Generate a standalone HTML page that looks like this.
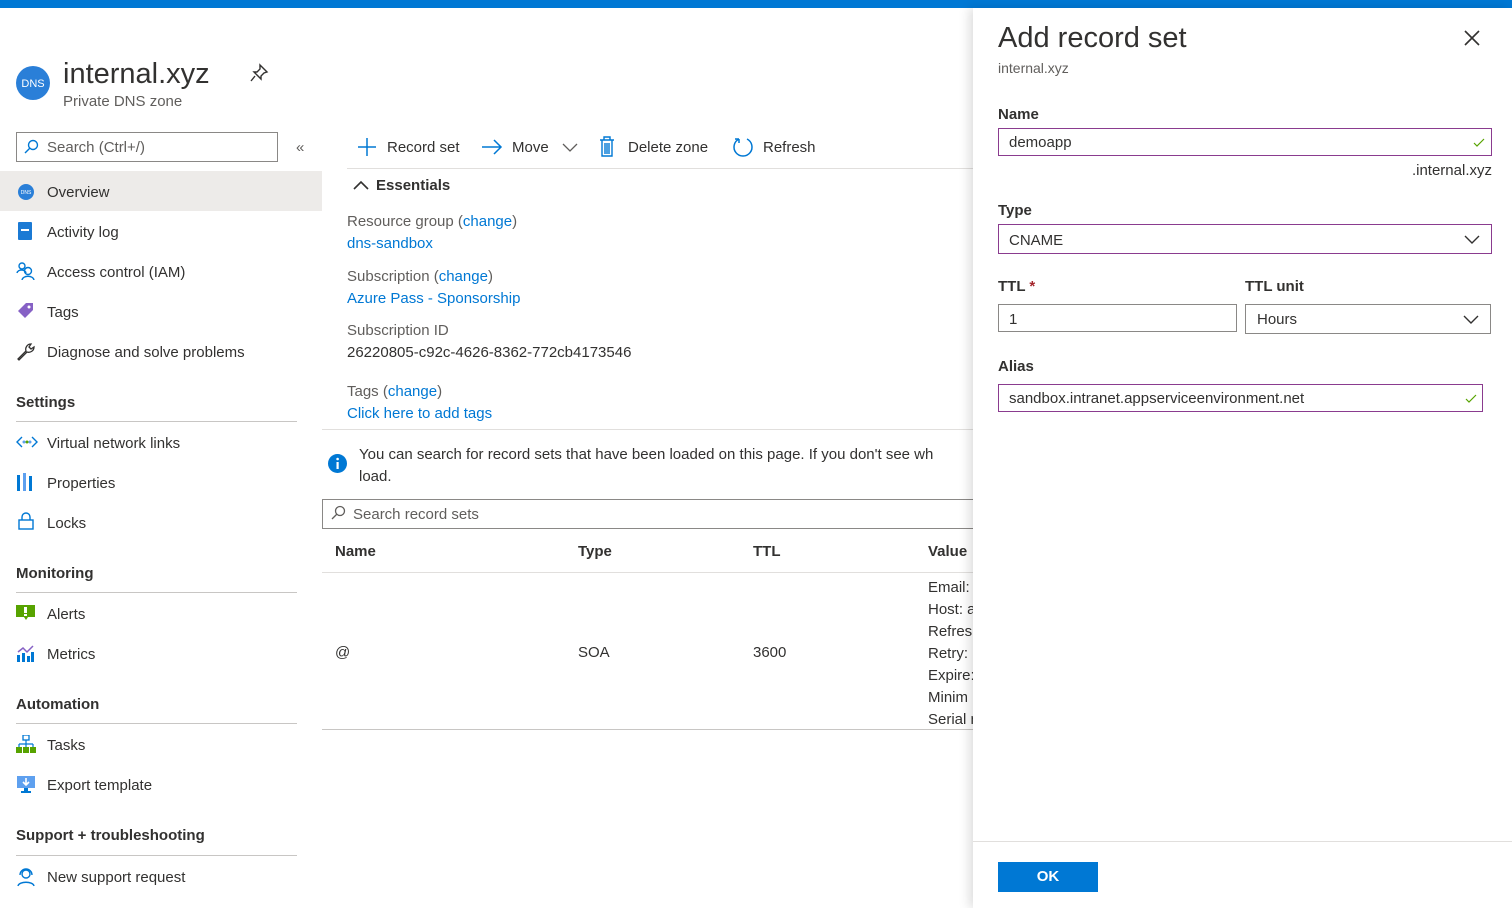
<!DOCTYPE html>
<html><head><meta charset="utf-8"><style>
*{margin:0;padding:0;box-sizing:border-box}
body{width:1512px;height:908px;overflow:hidden;background:#fff;font-family:"Liberation Sans",sans-serif;font-size:15px;color:#323130;position:relative}
.a{position:absolute;white-space:nowrap;line-height:20px;margin-top:1px}
.lk{color:#0078d4}
.g{color:#605e5c}
.b{font-weight:bold}
.ln{position:absolute;height:1px;background:#c8c6c4}
.ic{position:absolute}
.inp{position:absolute;border:1px solid #8a8886;background:#fff}
.pu{border-color:#8a3b8f}
</style></head><body>
<div style="position:absolute;left:0;top:0;width:1512px;height:8px;background:#0078d4"></div>

<svg class="ic" style="left:16px;top:66px" width="34" height="34"><circle cx="17" cy="17" r="17" fill="#2a7fd8"/><text x="17" y="21" font-size="11" fill="#fff" text-anchor="middle" font-family="Liberation Sans">DNS</text></svg>
<div class="a" style="left:63px;top:56px;font-size:29px;line-height:34px;color:#323130">internal.xyz</div>
<svg class="ic" style="left:249px;top:63px" width="20" height="20" fill="none" stroke="#323130" stroke-width="1.4"><path d="M11 2l7 7-3 1-3 3 0 3-7-7 3 0 3-3z M6 13l-4 5"/></svg>
<div class="a g" style="left:63px;top:91px">Private DNS zone</div>

<div class="inp" style="left:16px;top:132px;width:262px;height:30px"></div>
<svg class="ic" style="left:23px;top:139px" width="16" height="16" fill="none" stroke="#0078d4" stroke-width="1.4"><circle cx="10" cy="6" r="4.5"/><path d="M7 9l-5 5"/></svg>
<div class="a" style="left:47px;top:137px;color:#605e5c">Search (Ctrl+/)</div>
<div class="a g" style="left:296px;top:137px">«</div>

<div style="position:absolute;left:0;top:171px;width:322px;height:40px;background:#edebe9"></div>
<svg class="ic" style="left:17px;top:183px" width="18" height="18"><circle cx="9" cy="9" r="8" fill="#2a7fd8"/><text x="9" y="11" font-size="5" fill="#fff" text-anchor="middle">DNS</text></svg>
<div class="a" style="left:47px;top:182px">Overview</div>
<svg class="ic" style="left:18px;top:222px" width="16" height="18"><rect x="0" y="0" width="14" height="18" rx="1" fill="#1b7ad4"/><rect x="3" y="7" width="8" height="2" fill="#fff"/></svg>
<div class="a" style="left:47px;top:222px">Activity log</div>
<svg class="ic" style="left:16px;top:262px" width="20" height="18" fill="none" stroke="#0078d4" stroke-width="1.4"><circle cx="6" cy="4" r="3"/><path d="M1 11c1-4 8-4 9 0"/><circle cx="12" cy="9" r="3.5"/><path d="M6 18c1-5 11-5 12 0"/></svg>
<div class="a" style="left:47px;top:262px">Access control (IAM)</div>
<svg class="ic" style="left:17px;top:302px" width="18" height="18"><path d="M1 9l8-8h7v7l-8 8z" fill="#8661c5"/><circle cx="12" cy="5" r="1.5" fill="#fff"/></svg>
<div class="a" style="left:47px;top:302px">Tags</div>
<svg class="ic" style="left:16px;top:341px" width="20" height="20" fill="none" stroke="#323130" stroke-width="1.3"><path d="M2 18l8-8c-1-3 1-7 5-7l-2 3 2 2 3-2c0 4-4 6-7 5l-8 8z"/></svg>
<div class="a" style="left:47px;top:342px">Diagnose and solve problems</div>

<div class="a b" style="left:16px;top:392px">Settings</div>
<div class="ln" style="left:16px;top:421px;width:281px"></div>
<svg class="ic" style="left:16px;top:434px" width="22" height="16"><path d="M6 3l-5 5 5 5M16 3l5 5-5 5" fill="none" stroke="#0078d4" stroke-width="1.4"/><circle cx="8" cy="8" r="1.5" fill="#5ea0ef"/><circle cx="11" cy="8" r="1.5" fill="#57a300"/><circle cx="14" cy="8" r="1.5" fill="#5ea0ef"/></svg>
<div class="a" style="left:47px;top:433px">Virtual network links</div>
<svg class="ic" style="left:17px;top:473px" width="18" height="18"><rect x="0" y="2" width="3" height="16" fill="#0078d4"/><rect x="6" y="0" width="3" height="18" fill="#5ea0ef"/><rect x="12" y="3" width="3" height="15" fill="#0078d4"/></svg>
<div class="a" style="left:47px;top:473px">Properties</div>
<svg class="ic" style="left:18px;top:512px" width="16" height="18" fill="none" stroke="#0078d4" stroke-width="1.4"><rect x="1" y="8" width="14" height="9"/><path d="M4 8V5a4 4 0 018 0v3"/></svg>
<div class="a" style="left:47px;top:513px">Locks</div>

<div class="a b" style="left:16px;top:563px">Monitoring</div>
<div class="ln" style="left:16px;top:592px;width:281px"></div>
<svg class="ic" style="left:16px;top:605px" width="20" height="16"><rect x="0" y="0" width="19" height="12" fill="#57a300"/><rect x="8" y="2" width="3" height="6" fill="#fff"/><rect x="8" y="9" width="3" height="2" fill="#fff"/><path d="M8 12l2 3 2-3z" fill="#57a300"/></svg>
<div class="a" style="left:47px;top:604px">Alerts</div>
<svg class="ic" style="left:16px;top:644px" width="20" height="18"><path d="M2 8l5-4 4 4 6-6" fill="none" stroke="#8661c5" stroke-width="1.5"/><rect x="1" y="11" width="3" height="7" fill="#0078d4"/><rect x="6" y="9" width="3" height="9" fill="#0078d4"/><rect x="11" y="12" width="3" height="6" fill="#0078d4"/><rect x="15" y="8" width="3" height="10" fill="#0078d4"/></svg>
<div class="a" style="left:47px;top:644px">Metrics</div>

<div class="a b" style="left:16px;top:694px">Automation</div>
<div class="ln" style="left:16px;top:723px;width:281px"></div>
<svg class="ic" style="left:16px;top:735px" width="20" height="18"><rect x="7" y="0" width="6" height="5" fill="none" stroke="#0078d4" stroke-width="1.3"/><path d="M10 5v4M3 9h14M3 9v3M10 9v3M17 9v3" stroke="#0078d4" stroke-width="1.2"/><rect x="0" y="12" width="6" height="6" fill="#57a300"/><rect x="7" y="12" width="6" height="6" fill="#57a300"/><rect x="14" y="12" width="6" height="6" fill="#57a300"/></svg>
<div class="a" style="left:47px;top:735px">Tasks</div>
<svg class="ic" style="left:16px;top:775px" width="20" height="18"><rect x="1" y="1" width="18" height="12" fill="#5ea0ef"/><path d="M10 3v7M7 7l3 3 3-3" stroke="#fff" stroke-width="1.6" fill="none"/><rect x="8" y="13" width="4" height="3" fill="#0078d4"/><rect x="5" y="16" width="10" height="2" fill="#0078d4"/></svg>
<div class="a" style="left:47px;top:775px">Export template</div>

<div class="a b" style="left:16px;top:825px">Support + troubleshooting</div>
<div class="ln" style="left:16px;top:855px;width:281px"></div>
<svg class="ic" style="left:16px;top:867px" width="20" height="20" fill="none" stroke="#0078d4" stroke-width="1.4"><circle cx="10" cy="7" r="4"/><path d="M4 8a6 6 0 0112 0"/><path d="M2 19c1-5 15-5 16 0"/></svg>
<div class="a" style="left:47px;top:867px">New support request</div>

<svg class="ic" style="left:357px;top:137px" width="20" height="20" stroke="#0078d4" stroke-width="1.5"><path d="M10 1v18M1 10h18"/></svg>
<div class="a" style="left:387px;top:137px">Record set</div>
<svg class="ic" style="left:481px;top:138px" width="22" height="18" fill="none" stroke="#0078d4" stroke-width="1.5"><path d="M1 9h19M13 2l7 7-7 7"/></svg>
<div class="a" style="left:512px;top:137px">Move</div>
<svg class="ic" style="left:562px;top:142px" width="16" height="10" fill="none" stroke="#605e5c" stroke-width="1.3"><path d="M1 2l7 7 7-7"/></svg>
<svg class="ic" style="left:599px;top:136px" width="16" height="22" fill="none" stroke="#0078d4" stroke-width="1.4"><path d="M1 4h14M5 4V1h6v3M3 4v16h10V4M6 7v11M8 7v11M10 7v11"/></svg>
<div class="a" style="left:628px;top:137px">Delete zone</div>
<svg class="ic" style="left:732px;top:136px" width="22" height="22" fill="none" stroke="#0078d4" stroke-width="1.5"><path d="M7 3A9 9 0 1015 3M7 3v4M7 3H3"/></svg>
<div class="a" style="left:763px;top:137px">Refresh</div>
<div class="ln" style="left:347px;top:168px;width:630px;background:#e1dfdd"></div>

<svg class="ic" style="left:353px;top:179px" width="16" height="12" fill="none" stroke="#323130" stroke-width="1.6"><path d="M1 10l7-7 7 7"/></svg>
<div class="a b" style="left:376px;top:175px">Essentials</div>
<div class="a g" style="left:347px;top:211px">Resource group (<span class="lk">change</span>)</div>
<div class="a lk" style="left:347px;top:233px">dns-sandbox</div>
<div class="a g" style="left:347px;top:266px">Subscription (<span class="lk">change</span>)</div>
<div class="a lk" style="left:347px;top:288px">Azure Pass - Sponsorship</div>
<div class="a g" style="left:347px;top:320px">Subscription ID</div>
<div class="a" style="left:347px;top:342px">26220805-c92c-4626-8362-772cb4173546</div>
<div class="a g" style="left:347px;top:381px">Tags (<span class="lk">change</span>)</div>
<div class="a lk" style="left:347px;top:403px">Click here to add tags</div>
<div class="ln" style="left:322px;top:429px;width:660px;background:#e1dfdd"></div>

<svg class="ic" style="left:328px;top:454px" width="19" height="19"><circle cx="9.5" cy="9.5" r="9.5" fill="#0078d4"/><rect x="8.5" y="8" width="2.2" height="7" fill="#fff"/><circle cx="9.6" cy="5" r="1.3" fill="#fff"/></svg>
<div class="a" style="left:359px;top:444px">You can search for record sets that have been loaded on this page. If you don't see wh</div>
<div class="a" style="left:359px;top:466px">load.</div>

<div class="inp" style="left:322px;top:499px;width:660px;height:30px"></div>
<svg class="ic" style="left:330px;top:505px" width="16" height="16" fill="none" stroke="#605e5c" stroke-width="1.3"><circle cx="10" cy="6" r="4.5"/><path d="M7 9l-5 5"/></svg>
<div class="a g" style="left:353px;top:504px">Search record sets</div>

<div class="a b" style="left:335px;top:541px">Name</div>
<div class="a b" style="left:578px;top:541px">Type</div>
<div class="a b" style="left:753px;top:541px">TTL</div>
<div class="a b" style="left:928px;top:541px">Value</div>
<div class="ln" style="left:322px;top:572px;width:660px;background:#e1dfdd"></div>
<div class="a" style="left:335px;top:642px">@</div>
<div class="a" style="left:578px;top:642px">SOA</div>
<div class="a" style="left:753px;top:642px">3600</div>
<div class="a" style="left:928px;top:576px;line-height:22px">Email:<br>Host: a<br>Refresh<br>Retry:<br>Expire:<br>Minim<br>Serial n</div>
<div class="ln" style="left:322px;top:729px;width:660px;background:#c8c6c4"></div>

<div style="position:absolute;left:973px;top:8px;width:539px;height:900px;background:#fff;box-shadow:-4px 0 10px rgba(0,0,0,.13)">
<div class="a" style="left:25px;top:12px;font-size:29px;line-height:34px">Add record set</div>
<svg class="ic" style="left:491px;top:22px" width="16" height="16" stroke="#323130" stroke-width="1.6"><path d="M1 1l14 14M15 1L1 15"/></svg>
<div class="a g" style="left:25px;top:49px;font-size:14px">internal.xyz</div>
<div class="a b" style="left:25px;top:96px">Name</div>
<div class="inp pu" style="left:25px;top:120px;width:494px;height:28px"></div>
<div class="a" style="left:36px;top:124px">demoapp</div>
<svg class="ic" style="left:500px;top:130px" width="12" height="10" fill="none" stroke="#57a300" stroke-width="1.2"><path d="M1 5l3 3 7-7"/></svg>
<div class="a" style="right:20px;top:152px">.internal.xyz</div>
<div class="a b" style="left:25px;top:192px">Type</div>
<div class="inp pu" style="left:25px;top:216px;width:494px;height:30px"></div>
<div class="a" style="left:36px;top:222px">CNAME</div>
<svg class="ic" style="left:491px;top:227px" width="16" height="10" fill="none" stroke="#323130" stroke-width="1.4"><path d="M1 1l7 7 7-7"/></svg>
<div class="a b" style="left:25px;top:268px">TTL <span style="color:#a4262c">*</span></div>
<div class="a b" style="left:272px;top:268px">TTL unit</div>
<div class="inp" style="left:25px;top:296px;width:239px;height:28px"></div>
<div class="a" style="left:36px;top:301px">1</div>
<div class="inp" style="left:272px;top:296px;width:246px;height:30px"></div>
<div class="a" style="left:284px;top:301px">Hours</div>
<svg class="ic" style="left:490px;top:307px" width="16" height="10" fill="none" stroke="#323130" stroke-width="1.4"><path d="M1 1l7 7 7-7"/></svg>
<div class="a b" style="left:25px;top:348px">Alias</div>
<div class="inp pu" style="left:25px;top:376px;width:485px;height:28px"></div>
<div class="a" style="left:36px;top:380px">sandbox.intranet.appserviceenvironment.net</div>
<svg class="ic" style="left:492px;top:386px" width="12" height="10" fill="none" stroke="#57a300" stroke-width="1.2"><path d="M1 5l3 3 7-7"/></svg>
<div class="ln" style="left:0;top:833px;width:539px;background:#e1dfdd"></div>
<div style="position:absolute;left:25px;top:854px;width:100px;height:30px;background:#0078d4;color:#fff;font-weight:bold;text-align:center;line-height:30px">OK</div>
</div>
</body></html>
